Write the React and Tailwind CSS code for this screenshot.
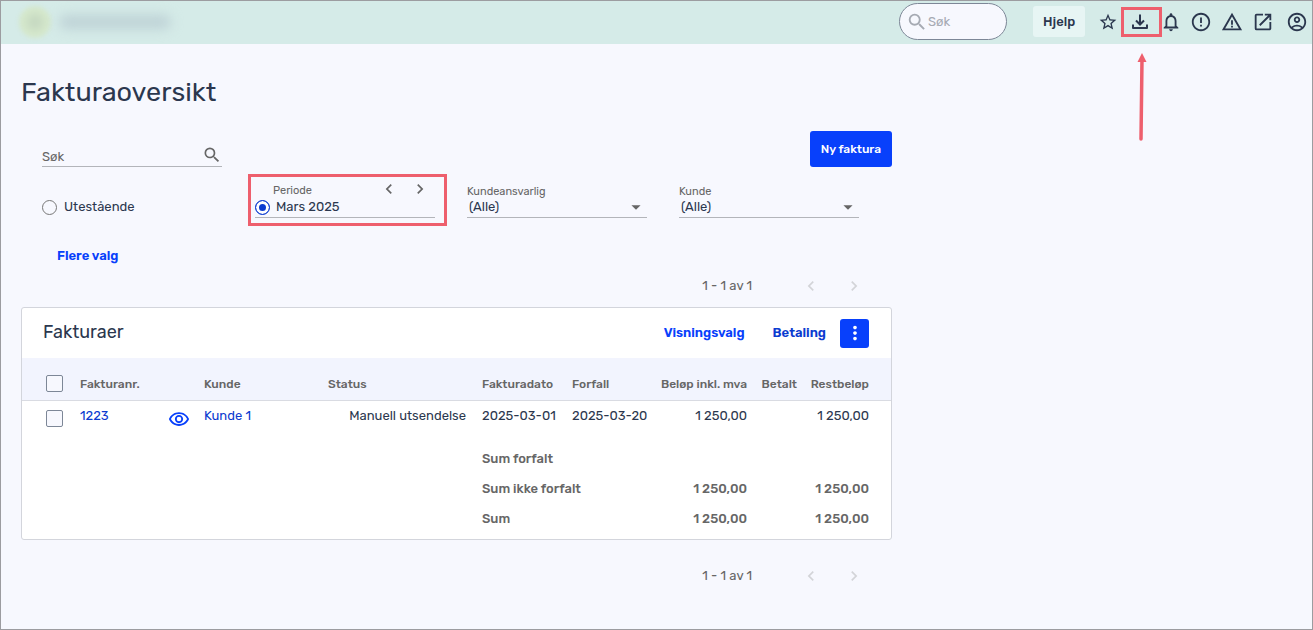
import { useState } from "react";
import {
  MdArrowDropDown,
  MdChevronLeft,
  MdChevronRight,
  MdErrorOutline,
  MdMoreVert,
  MdNotificationsNone,
  MdOpenInNew,
  MdOutlineAccountCircle,
  MdOutlineRemoveRedEye,
  MdSearch,
  MdStarBorder,
  MdWarningAmber,
} from "react-icons/md";

const invoices = [
  {
    number: "1223",
    customer: "Kunde 1",
    status: "Manuell utsendelse",
    date: "2025-03-01",
    due: "2025-03-20",
    amount: "1 250,00",
    paid: "",
    rest: "1 250,00",
  },
];

const totals = [
  { label: "Sum forfalt", amount: "", rest: "" },
  { label: "Sum ikke forfalt", amount: "1 250,00", rest: "1 250,00" },
  { label: "Sum", amount: "1 250,00", rest: "1 250,00" },
];

function IconButton({ label, className = "", children }) {
  return (
    <button type="button" aria-label={label} className={`flex items-center justify-center ${className}`}>
      {children}
    </button>
  );
}

function DownloadIcon() {
  return (
    <svg viewBox="0 0 16 16" className="size-4" fill="none" stroke="currentColor" strokeWidth="2" aria-hidden="true">
      <path d="M8 0.500V10" />
      <path d="M4 6.500 8 10.500 12 6.500" />
      <path d="M1 10.500V14H15V10.500" strokeLinejoin="round" />
    </svg>
  );
}

function TopBar() {
  return (
    <header className="flex h-[43px] items-center justify-between bg-[#d5ebe8] pb-0.5 pl-[18px] pr-1 text-[#2b374e]">
      <div className="flex items-center gap-2" aria-hidden="true">
        <div className="flex size-8 items-center justify-center rounded-full bg-[#d6e9cd] blur-[2px]">
          <div className="size-4 rounded-full bg-[#c3d6bf] blur-[4px]" />
        </div>
        <div className="h-3.5 w-28 rounded-full bg-[#bed2d6] blur-[6px]" />
      </div>

      <div className="flex items-center">
        <label className="flex h-[37px] w-[108px] items-center rounded-full border border-[#7d8797] bg-[#f7f8fe] pl-1.5 pr-2">
          <MdSearch className="size-[22px] shrink-0 text-[#a6aab3]" />
          <input
            type="text"
            aria-label="Søk"
            placeholder="Søk"
            className="w-full min-w-0 bg-transparent text-[13px] outline-none placeholder:text-[#a6aab3]"
          />
        </label>
        <button type="button" className="ml-[26px] h-[31px] w-[52px] rounded-[3px] bg-[#e7f5f4] text-[13px] font-medium">
          Hjelp
        </button>
        <IconButton label="Favoritter" className="ml-[13px]">
          <MdStarBorder className="size-5" />
        </IconButton>
        <div className="relative ml-[3px] border-[3px] border-[#ee5f6d]">
          <IconButton label="Last ned" className="h-6 w-[35px] pr-1">
            <DownloadIcon />
          </IconButton>
          <svg viewBox="0 0 10 88" className="absolute left-[13px] top-[43px] h-[88px] w-[10px] text-[#ee5f6d]" aria-hidden="true">
            <path d="M5 6 4 86" stroke="currentColor" strokeWidth="3.500" strokeLinecap="round" />
            <path d="M5 0 9.500 9H.5Z" fill="currentColor" />
          </svg>
        </div>
        <IconButton label="Varsler" className="w-[18px]">
          <MdNotificationsNone className="size-[22px] shrink-0" />
        </IconButton>
        <div className="ml-2.5 flex items-center gap-[9px]">
          <IconButton label="Feil">
            <MdErrorOutline className="size-[22px]" />
          </IconButton>
          <IconButton label="Advarsler">
            <MdWarningAmber className="size-[22px]" />
          </IconButton>
          <IconButton label="Åpne i nytt vindu">
            <MdOpenInNew className="size-[22px]" />
          </IconButton>
        </div>
        <IconButton label="Konto" className="ml-3">
          <MdOutlineAccountCircle className="size-[22px]" />
        </IconButton>
      </div>
    </header>
  );
}

function SelectField({ id, label }) {
  return (
    <div className="w-[180px] border-b border-[#b3b5ba]">
      <label htmlFor={id} className="block text-[11px] leading-[14px] text-[#666]">
        {label}
      </label>
      <div className="relative">
        <select id={id} className="block h-[18px] w-full appearance-none pb-0.5 pl-0.5 text-[13px] leading-4">
          <option>(Alle)</option>
        </select>
        <MdArrowDropDown className="pointer-events-none absolute -top-[3px] right-0 size-[22px] text-[#666]" />
      </div>
    </div>
  );
}

function Radio({ id, checked, onChange }) {
  return (
    <input
      type="radio"
      name="period"
      id={id}
      checked={checked}
      onChange={onChange}
      className="size-[15px] shrink-0 appearance-none rounded-full border border-[#777] checked:border-[#0b3bd0] checked:bg-[#0b3bd0] checked:shadow-[inset_0_0_0_3px_white]"
    />
  );
}

function Filters() {
  const [mode, setMode] = useState("month");

  return (
    <section className="pl-[21px]">
      <div className="flex h-9 items-end justify-between">
        <label className="flex w-[180px] items-center justify-between border-b border-[#b3b5ba] pb-px text-[#666]">
          <input
            type="text"
            aria-label="Søk"
            placeholder="Søk"
            className="min-w-0 flex-1 pt-1 text-[13px] leading-4 outline-none placeholder:text-[#666]"
          />
          <MdSearch className="size-5" />
        </label>
        <button type="button" className="h-9 w-[82px] rounded-[3px] bg-[#0840fb] text-xs font-medium text-white">
          Ny faktura
        </button>
      </div>

      <div className="mt-4 flex items-end gap-8">
        <div className="flex w-[181px] items-center gap-[7px] pb-[3px]">
          <Radio id="outstanding" checked={mode === "outstanding"} onChange={() => setMode("outstanding")} />
          <label htmlFor="outstanding" className="text-[13px] leading-4">
            Utestående
          </label>
        </div>
        <div className="relative w-[180px] border-b border-[#b3b5ba]">
          <div className="flex items-center pl-[18px] pr-[5px] text-[#666]">
            <span className="flex-1 text-[11px] leading-[14px]">Periode</span>
            <div className="-my-1 flex gap-[11px] pb-1">
              <IconButton label="Forrige periode">
                <MdChevronLeft className="size-5" />
              </IconButton>
              <IconButton label="Neste periode">
                <MdChevronRight className="size-5" />
              </IconButton>
            </div>
          </div>
          <div className="flex h-[18px] items-center gap-1.5 pb-0.5">
            <Radio id="month" checked={mode === "month"} onChange={() => setMode("month")} />
            <label htmlFor="month" className="text-[13px] leading-4">
              Mars 2025
            </label>
          </div>
          <div className="pointer-events-none absolute -bottom-[9px] -left-[7px] -right-3 -top-[9px] border-[3px] border-[#ee5f6d]" />
        </div>
        <SelectField id="responsible" label="Kundeansvarlig" />
        <SelectField id="customer" label="Kunde" />
      </div>

      <button type="button" className="ml-[15px] mt-7 block text-[13px] font-semibold leading-5 text-[#0840fb]">
        Flere valg
      </button>
    </section>
  );
}

function Pager() {
  return (
    <nav aria-label="Sider" className="flex h-5 items-center justify-end pr-7">
      <span className="mr-[49px] text-[13px] text-[#666]">1 - 1 av 1</span>
      <div className="flex gap-[23px] text-[#d3d4d8]">
        <IconButton label="Forrige side">
          <MdChevronLeft className="size-5" />
        </IconButton>
        <IconButton label="Neste side">
          <MdChevronRight className="size-5" />
        </IconButton>
      </div>
    </nav>
  );
}

function Checkbox({ label }) {
  return (
    <input
      type="checkbox"
      aria-label={label}
      className="ml-6 block size-[17px] appearance-none rounded-[2px] border border-[#7d8797] bg-[#f7f8fe] checked:bg-[#0840fb]"
    />
  );
}

function InvoiceTable() {
  return (
    <table className="w-full table-fixed text-left text-[13px] leading-4">
      <colgroup>
        <col className="w-[50px]" />
        <col className="w-[124px]" />
        <col className="w-[124px]" />
        <col className="w-[154px]" />
        <col className="w-[90px]" />
        <col className="w-[91px]" />
        <col className="w-[100px]" />
        <col className="w-[50px]" />
        <col className="w-[86px]" />
      </colgroup>
      <thead className="border-b border-[#d9dbe2] bg-[#f2f4fe] text-xs text-[#666]">
        <tr className="h-[42px] whitespace-nowrap [&>th]:pt-2.5 [&>th]:font-medium">
          <th>
            <Checkbox label="Velg alle" />
          </th>
          <th className="px-2">Fakturanr.</th>
          <th className="px-2">Kunde</th>
          <th className="px-2">Status</th>
          <th className="px-2">Fakturadato</th>
          <th className="px-2">Forfall</th>
          <th className="pr-2 text-right">Beløp inkl. mva</th>
          <th className="pr-2 text-right">Betalt</th>
          <th className="pr-[22px] text-right">Restbeløp</th>
        </tr>
      </thead>
      <tbody>
        {invoices.map((invoice) => (
          <tr key={invoice.number} className="h-11 whitespace-nowrap align-top [&>td]:pt-[7px]">
            <td>
              <div className="pt-0.5">
                <Checkbox label={`Velg faktura ${invoice.number}`} />
              </div>
            </td>
            <td className="pl-2 pr-1.5">
              <div className="flex items-start justify-between">
                <a href="#faktura" className="text-[#0b3bd0]">
                  {invoice.number}
                </a>
                <IconButton label="Vis faktura" className="text-[#0840fb]">
                  <MdOutlineRemoveRedEye className="size-[22px]" />
                </IconButton>
              </div>
            </td>
            <td className="px-2">
              <a href="#kunde" className="text-[#0b3bd0]">
                {invoice.customer}
              </a>
            </td>
            <td className="pr-2 text-right">{invoice.status}</td>
            <td className="px-2">{invoice.date}</td>
            <td className="px-2">{invoice.due}</td>
            <td className="pr-2 text-right">{invoice.amount}</td>
            <td className="pr-2 text-right">{invoice.paid}</td>
            <td className="pr-[22px] text-right">{invoice.rest}</td>
          </tr>
        ))}
      </tbody>
      <tfoot className="text-[#666]">
        {totals.map((total) => (
          <tr key={total.label} className="h-[30px] font-medium">
            <td colSpan={4} />
            <td colSpan={2} className="px-2">
              {total.label}
            </td>
            <td className="pr-2 text-right">{total.amount}</td>
            <td />
            <td className="pr-[22px] text-right">{total.rest}</td>
          </tr>
        ))}
      </tfoot>
    </table>
  );
}

export default function App() {
  return (
    <div className="min-h-screen border border-[#9c9ca0] bg-[#f7f8fe] font-['Rubik','Inter',sans-serif] text-[#2b374e]">
      <TopBar />
      <main className="max-w-[891px] pl-5">
        <h1 className="pb-[21px] pt-[30px] text-[27px] leading-9">Fakturaoversikt</h1>
        <Filters />
        <div className="mt-[10px]">
          <Pager />
        </div>

        <section className="mt-[11px] rounded-[3px] border border-[#d3d5dc] bg-white pb-[5px]">
          <div className="flex h-[50px] items-center pl-[21px] pr-[22px]">
            <h2 className="flex-1 pb-0.5 text-lg">Fakturaer</h2>
            <button type="button" className="mr-7 text-[13px] font-semibold text-[#0840fb]">
              Visningsvalg
            </button>
            <button type="button" className="mr-[14px] text-[13px] font-semibold text-[#0b3bd0]">
              Betaling
            </button>
            <IconButton label="Flere handlinger" className="size-[29px] rounded-[3px] bg-[#0840fb] text-white">
              <MdMoreVert className="size-[22px]" />
            </IconButton>
          </div>
          <InvoiceTable />
        </section>

        <div className="mt-[26px]">
          <Pager />
        </div>
      </main>
    </div>
  );
}
